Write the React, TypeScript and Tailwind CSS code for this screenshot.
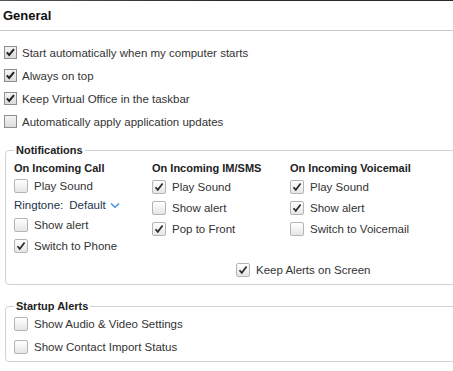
import type { ReactNode } from "react";

type BoxProps = { checked?: boolean; big?: boolean };

function Box({ checked, big }: BoxProps) {
    if (big) {
        return (
            <span className="flex h-[14px] w-[14px] shrink-0 items-center justify-center rounded-[2px] border border-[#b4b4b4] bg-gradient-to-b from-[#ffffff] to-[#e6e6e6]">
                {checked && (
                    <svg width="12" height="12" viewBox="0 0 12 12">
                        <path d="M2.5 6.2 L4.8 8.8 L9.6 2.6" fill="none" stroke="#2a2a2a" strokeWidth="1.7" />
                    </svg>
                )}
            </span>
        );
    }
    return (
        <span className="flex h-[13px] w-[13px] shrink-0 items-center justify-center border border-[#8e8e8e] bg-gradient-to-b from-[#f4f4f4] to-[#dcdcdc]">
            {checked && (
                <svg width="11" height="11" viewBox="0 0 11 11">
                    <path d="M1.8 5.4 L4.2 8 L9 2.2" fill="none" stroke="#222" strokeWidth="2" />
                </svg>
            )}
        </span>
    );
}

function TopRow({ checked, children }: { checked?: boolean; children: ReactNode }) {
    return (
        <div className="flex h-[23px] items-center gap-[5px] pl-[4px]">
            <Box checked={checked} />
            <span>{children}</span>
        </div>
    );
}

function Row({ checked, h, children }: { checked?: boolean; h: string; children: ReactNode }) {
    return (
        <div className={`flex items-center gap-[6px] ${h}`}>
            <Box big checked={checked} />
            <span>{children}</span>
        </div>
    );
}

export default function App() {
    return (
        <div className="h-[371px] w-[453px] overflow-hidden bg-white text-[11.5px] leading-[14px] text-[#333] [font-family:'Liberation_Sans',Arial,sans-serif]">
            <div className="h-px bg-gradient-to-r from-[#5a5250] via-[#2e2826] to-[#2e2826]" />
            <div className="flex h-[30px] items-center border-b border-[#c9c9c9] pl-[3px] text-[13px] font-bold text-[#111]">
                General
            </div>

            <div className="pt-[10px]">
                <TopRow checked>Start automatically when my computer starts</TopRow>
                <TopRow checked>Always on top</TopRow>
                <TopRow checked>Keep Virtual Office in the taskbar</TopRow>
                <TopRow>Automatically apply application updates</TopRow>
            </div>

            <fieldset className="ml-[5px] mt-[10px] w-[480px] rounded-[4px] border border-[#d2d2d2] pb-[3px] pl-[8px]">
                <legend className="px-[2px] text-[11px] font-bold text-[#222]">Notifications</legend>
                <div className="mt-[3px] grid grid-cols-[138px_138px_138px]">
                    <div>
                        <div className="flex h-[16px] items-center text-[11px] font-bold text-[#222]">On Incoming Call</div>
                        <Row h="h-[20px]">Play Sound</Row>
                        <div className="flex h-[18px] items-center text-[#26344c]">
                            <span>Ringtone:</span>
                            <span className="ml-[6px]">Default</span>
                            <svg className="ml-[4px]" width="10" height="7" viewBox="0 0 10 7">
                                <path d="M1 1.5 L5 5.2 L9 1.5" fill="none" stroke="#3d8fe0" strokeWidth="1.4" />
                            </svg>
                        </div>
                        <Row h="h-[22px]">Show alert</Row>
                        <Row h="h-[20px]" checked>Switch to Phone</Row>
                    </div>
                    <div>
                        <div className="flex h-[16px] items-center text-[11px] font-bold text-[#222]">On Incoming IM/SMS</div>
                        <Row h="h-[21px]" checked>Play Sound</Row>
                        <Row h="h-[21px]">Show alert</Row>
                        <Row h="h-[21px]" checked>Pop to Front</Row>
                    </div>
                    <div>
                        <div className="flex h-[16px] items-center text-[11px] font-bold text-[#222]">On Incoming Voicemail</div>
                        <Row h="h-[21px]" checked>Play Sound</Row>
                        <Row h="h-[21px]" checked>Show alert</Row>
                        <Row h="h-[21px]">Switch to Voicemail</Row>
                    </div>
                </div>
                <div className="ml-[222px] mt-[3px]">
                    <Row h="h-[22px]" checked>Keep Alerts on Screen</Row>
                </div>
            </fieldset>

            <fieldset className="ml-[5px] mt-[14px] w-[480px] rounded-[4px] border border-[#d2d2d2] pb-[3px] pl-[8px]">
                <legend className="px-[2px] text-[11px] font-bold text-[#222]">Startup Alerts</legend>
                <Row h="h-[22px]">Show Audio &amp; Video Settings</Row>
                <div className="mt-px">
                    <Row h="h-[22px]">Show Contact Import Status</Row>
                </div>
            </fieldset>
        </div>
    );
}
